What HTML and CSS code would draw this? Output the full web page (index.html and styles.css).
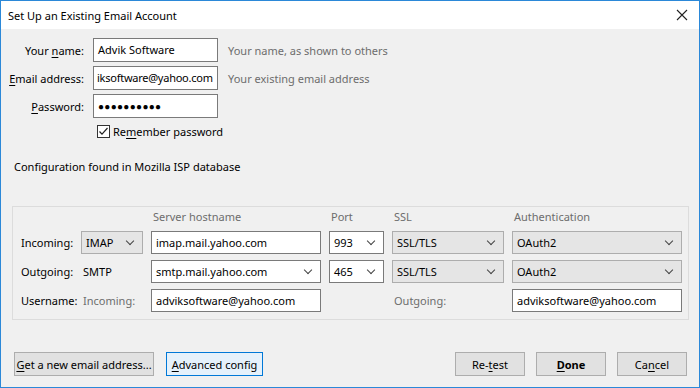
FILE: index.html
```html
<!DOCTYPE html>
<html lang="en">

<head>
    <meta charset="UTF-8">
    <meta name="viewport" content="width=device-width, initial-scale=1.0">
    <title>Set Up an Existing Email Account</title>
    <link rel="stylesheet" href="styles.css">
</head>

<body>
    <div class="window">
        <div class="titlebar">
            <span class="title">Set Up an Existing Email Account</span>
            <svg class="close" width="12" height="12" viewBox="0 0 12 12">
                <path d="M1 1 L11 11 M11 1 L1 11" stroke="#222" stroke-width="1.1" fill="none" />
            </svg>
        </div>

        <div class="content">
            <div class="account-form">
                <div class="label">Your <u>n</u>ame:</div>
                <div class="field">Advik Software</div>
                <div class="hint">Your name, as shown to others</div>

                <div class="label"><u>E</u>mail address:</div>
                <div class="field tight">iksoftware@yahoo.com</div>
                <div class="hint">Your existing email address</div>

                <div class="label"><u>P</u>assword:</div>
                <div class="field dots">&#9679;&#9679;&#9679;&#9679;&#9679;&#9679;&#9679;&#9679;&#9679;&#9679;</div>
                <div></div>

                <div></div>
                <div class="remember">
                    <svg class="checkbox" width="13" height="13" viewBox="0 0 13 13">
                        <rect x="0.5" y="0.5" width="12" height="12" fill="#fff" stroke="#333" />
                        <path d="M2.5 6.5 L5 9.2 L10.5 3" stroke="#222" stroke-width="1.2" fill="none" />
                    </svg>
                    <span>Re<u>m</u>ember password</span>
                </div>
                <div></div>
            </div>

            <div class="status-text">Configuration found in Mozilla ISP database</div>

            <div class="server-box">
                <div></div>
                <div></div>
                <div class="col-head">Server hostname</div>
                <div class="col-head">Port</div>
                <div class="col-head">SSL</div>
                <div class="col-head">Authentication</div>

                <div class="row-label">Incoming:</div>
                <div class="combo grey">IMAP<span class="chev"></span></div>
                <div class="field wide">imap.mail.yahoo.com</div>
                <div class="combo">993<span class="chev"></span></div>
                <div class="combo grey">SSL/TLS<span class="chev"></span></div>
                <div class="combo grey">OAuth2<span class="chev"></span></div>

                <div class="row-label">Outgoing:</div>
                <div class="plain">SMTP</div>
                <div class="combo">smtp.mail.yahoo.com<span class="chev"></span></div>
                <div class="combo">465<span class="chev"></span></div>
                <div class="combo grey">SSL/TLS<span class="chev"></span></div>
                <div class="combo grey">OAuth2<span class="chev"></span></div>

                <div class="row-label">Username:</div>
                <div class="plain muted">Incoming:</div>
                <div class="field wide">adviksoftware@yahoo.com</div>
                <div></div>
                <div class="plain muted">Outgoing:</div>
                <div class="field wide">adviksoftware@yahoo.com</div>
            </div>

            <div class="buttons">
                <button class="btn btn-new"><u>G</u>et a new email address...</button>
                <button class="btn btn-adv"><u>A</u>dvanced config</button>
                <div class="spacer"></div>
                <button class="btn btn-retest">Re-<u>t</u>est</button>
                <button class="btn btn-done"><u>D</u>one</button>
                <button class="btn btn-cancel">Ca<u>n</u>cel</button>
            </div>
        </div>
    </div>
</body>

</html>
```

FILE: styles.css
```css
* {
    box-sizing: border-box;
}

body {
    margin: 0;
    font-family: "Noto Sans", "Open Sans", sans-serif;
    font-size: 11px;
    color: #000;
    background-color: #fff;
}

.window {
    width: 700px;
    height: 388px;
    border: 1px solid #2b88d8;
    display: flex;
    flex-direction: column;
}

.titlebar {
    height: 28px;
    background-color: #fff;
    display: flex;
    align-items: center;
    justify-content: space-between;
    padding: 0 10px 0 7px;
    white-space: nowrap;
}

.close {
    margin-right: 1px;
}

.content {
    flex: 1;
    background-color: #f0f0f0;
    display: flex;
    flex-direction: column;
    padding: 9px 0 11px 0;
    white-space: nowrap;
}

u {
    text-decoration-thickness: 1px;
    text-underline-offset: 2px;
}

/* account form */

.account-form {
    display: grid;
    grid-template-columns: 83px 125px auto;
    grid-template-rows: 24px 24px 24px 18px;
    column-gap: 9px;
    row-gap: 4px;
    align-items: center;
}

.label {
    text-align: right;
}

.field {
    height: 24px;
    line-height: 22px;
    background-color: #fff;
    border: 1px solid #7a7a7a;
    padding: 0 4px;
    overflow: hidden;
}

.field.tight {
    padding: 0 2px 0 3px;
    letter-spacing: -0.25px;
}

.dots {
    font-size: 10px;
    letter-spacing: 0.3px;
}

.hint {
    color: #6d6d6d;
    margin-left: 1px;
}

.remember {
    display: flex;
    align-items: center;
    gap: 3px;
    padding-left: 4px;
}

.checkbox {
    flex-shrink: 0;
}

.status-text {
    margin-top: 19px;
    padding-left: 13px;
}

/* server settings */

.server-box {
    margin: 32px 10px 0 11px;
    border: 1px solid #dcdcdc;
    display: grid;
    grid-template-columns: 52px 62px 170px 55px 112px 170px;
    grid-template-rows: 16px 23px 23px 23px;
    column-gap: 8px;
    row-gap: 6px;
    padding: 2px 4px 7px 8px;
    align-items: center;
}

.col-head {
    color: #6d6d6d;
    padding-left: 2px;
    line-height: 16px;
    align-self: start;
}

.plain {
    padding-left: 2px;
}

.muted {
    color: #6d6d6d;
}

.wide {
    height: 23px;
    line-height: 21px;
}

.combo {
    height: 23px;
    line-height: 21px;
    border: 1px solid #7a7a7a;
    background-color: #fff;
    padding: 0 4px;
    display: flex;
    justify-content: space-between;
    align-items: center;
}

.combo.grey {
    background-color: #e5e5e5;
    border-color: #adadad;
}

.chev {
    width: 6px;
    height: 6px;
    border-right: 1px solid #444;
    border-bottom: 1px solid #444;
    transform: rotate(45deg);
    margin: 0 5px 3px 0;
}

/* buttons */

.buttons {
    margin-top: auto;
    display: flex;
    padding: 0 12px 0 13px;
}

.btn {
    height: 24px;
    font-family: inherit;
    font-size: 11px;
    color: #000;
    background-color: #e1e1e1;
    border: 1px solid #adadad;
    padding: 0;
    white-space: nowrap;
}

.btn-new {
    width: 140px;
}

.btn-adv {
    width: 97px;
    margin-left: 12px;
    background-color: #e5f1fb;
    border-color: #0078d7;
}

.spacer {
    flex: 1;
}

.btn-retest,
.btn-done,
.btn-cancel {
    width: 70px;
}

.btn-done {
    margin-left: 11px;
    font-weight: bold;
}

.btn-cancel {
    margin-left: 11px;
}
```
